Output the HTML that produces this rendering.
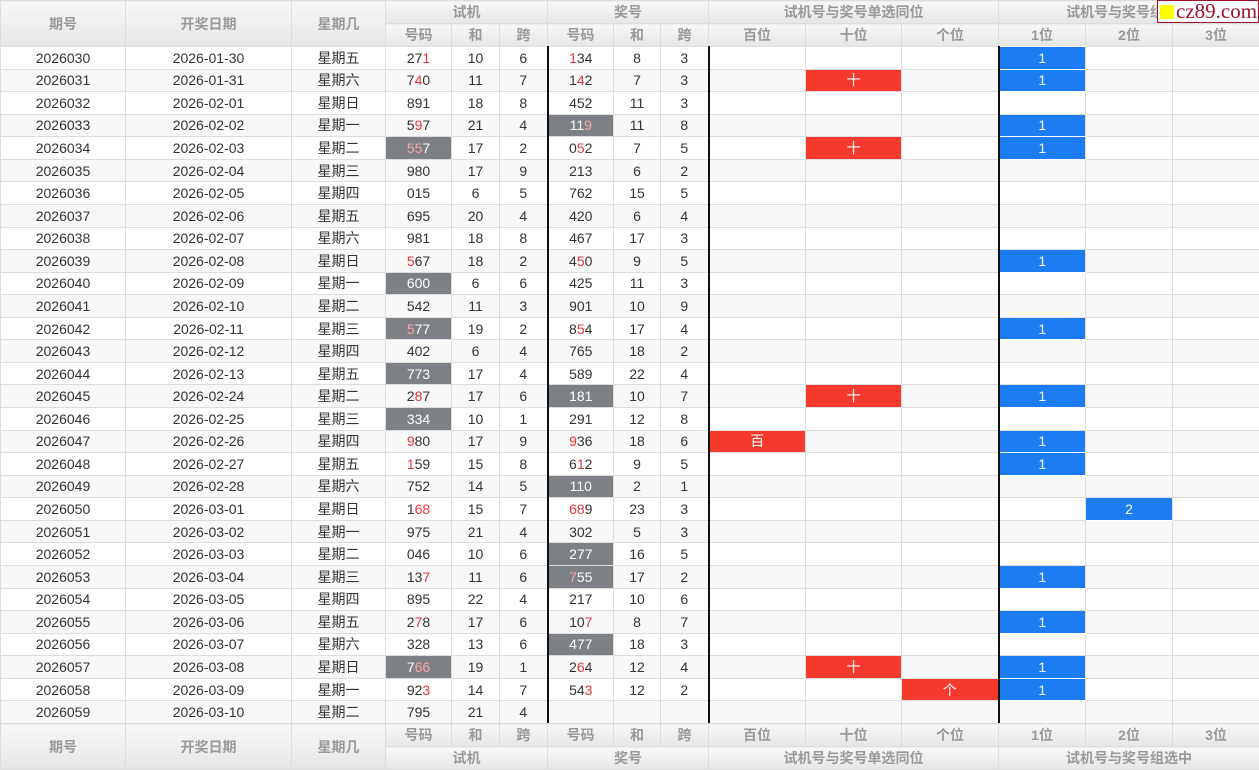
<!DOCTYPE html>
<html><head><meta charset="utf-8"><style>
*{margin:0;padding:0;box-sizing:border-box}
body{width:1259px;height:768px;overflow:hidden;background:#fff;font-family:"Liberation Sans","Noto Sans CJK SC",sans-serif;font-size:14px;color:#333;position:relative}
table{border-collapse:collapse;table-layout:fixed;width:1259px;position:absolute;left:0}
td,th{border:1px solid #ddd;text-align:center;white-space:nowrap;overflow:hidden;padding:0}
th{background:linear-gradient(#f7f7f7,#e6e6e6);color:#999;font-weight:bold;height:23px;font-size:14px}
#hd{top:0}#ft{top:723px}
#bd{top:46px}
#bd tr{height:22.57px}
#bd tr:nth-child(even) td{background:#f8f8f8}
#bd td.g{background:#7d8084!important;color:#fff}
#bd td.b{background:#1c7cf2!important;color:#fff;border-color:#fff #ddd}
#bd td.x{background:#f5392c!important;color:#fff}
.r{color:#e8363c}
.g .r{color:#f8a7a7}
.L{border-left:2px solid #111!important}
#logo{position:absolute;left:1157px;top:0;width:102px;height:23px;background:#fff;border:1px solid #a0102a;font-family:"Liberation Serif",serif;font-size:21px;color:#a0102a;line-height:20px;padding-left:2px}
#logo i{display:inline-block;width:14px;height:14px;background:#ffff00;margin-right:2px;vertical-align:-1px}
</style></head><body>
<table id="hd"><colgroup><col width="125"><col width="166"><col width="94"><col width="66"><col width="48"><col width="48"><col width="66"><col width="47"><col width="48"><col width="97"><col width="96"><col width="97"><col width="87"><col width="87"><col width="87"></colgroup>
<tr><th rowspan="2">期号</th><th rowspan="2">开奖日期</th><th rowspan="2">星期几</th><th colspan="3">试机</th><th colspan="3">奖号</th><th colspan="3">试机号与奖号单选同位</th><th colspan="3">试机号与奖号组选中</th></tr>
<tr><th>号码</th><th>和</th><th>跨</th><th>号码</th><th>和</th><th>跨</th><th>百位</th><th>十位</th><th>个位</th><th>1位</th><th>2位</th><th>3位</th></tr>
</table>
<table id="bd"><colgroup><col width="125"><col width="166"><col width="94"><col width="66"><col width="48"><col width="48"><col width="66"><col width="47"><col width="48"><col width="97"><col width="96"><col width="97"><col width="87"><col width="87"><col width="87"></colgroup>
<tr><td>2026030</td><td>2026-01-30</td><td>星期五</td><td>27<span class="r">1</span></td><td>10</td><td>6</td><td class="L"><span class="r">1</span>34</td><td>8</td><td>3</td><td class="L"></td><td></td><td></td><td class="L b">1</td><td></td><td></td></tr>
<tr><td>2026031</td><td>2026-01-31</td><td>星期六</td><td>7<span class="r">4</span>0</td><td>11</td><td>7</td><td class="L">1<span class="r">4</span>2</td><td>7</td><td>3</td><td class="L"></td><td class="x">十</td><td></td><td class="L b">1</td><td></td><td></td></tr>
<tr><td>2026032</td><td>2026-02-01</td><td>星期日</td><td>891</td><td>18</td><td>8</td><td class="L">452</td><td>11</td><td>3</td><td class="L"></td><td></td><td></td><td class="L"></td><td></td><td></td></tr>
<tr><td>2026033</td><td>2026-02-02</td><td>星期一</td><td>5<span class="r">9</span>7</td><td>21</td><td>4</td><td class="L g">11<span class="r">9</span></td><td>11</td><td>8</td><td class="L"></td><td></td><td></td><td class="L b">1</td><td></td><td></td></tr>
<tr><td>2026034</td><td>2026-02-03</td><td>星期二</td><td class="g"><span class="r">55</span>7</td><td>17</td><td>2</td><td class="L">0<span class="r">5</span>2</td><td>7</td><td>5</td><td class="L"></td><td class="x">十</td><td></td><td class="L b">1</td><td></td><td></td></tr>
<tr><td>2026035</td><td>2026-02-04</td><td>星期三</td><td>980</td><td>17</td><td>9</td><td class="L">213</td><td>6</td><td>2</td><td class="L"></td><td></td><td></td><td class="L"></td><td></td><td></td></tr>
<tr><td>2026036</td><td>2026-02-05</td><td>星期四</td><td>015</td><td>6</td><td>5</td><td class="L">762</td><td>15</td><td>5</td><td class="L"></td><td></td><td></td><td class="L"></td><td></td><td></td></tr>
<tr><td>2026037</td><td>2026-02-06</td><td>星期五</td><td>695</td><td>20</td><td>4</td><td class="L">420</td><td>6</td><td>4</td><td class="L"></td><td></td><td></td><td class="L"></td><td></td><td></td></tr>
<tr><td>2026038</td><td>2026-02-07</td><td>星期六</td><td>981</td><td>18</td><td>8</td><td class="L">467</td><td>17</td><td>3</td><td class="L"></td><td></td><td></td><td class="L"></td><td></td><td></td></tr>
<tr><td>2026039</td><td>2026-02-08</td><td>星期日</td><td><span class="r">5</span>67</td><td>18</td><td>2</td><td class="L">4<span class="r">5</span>0</td><td>9</td><td>5</td><td class="L"></td><td></td><td></td><td class="L b">1</td><td></td><td></td></tr>
<tr><td>2026040</td><td>2026-02-09</td><td>星期一</td><td class="g">600</td><td>6</td><td>6</td><td class="L">425</td><td>11</td><td>3</td><td class="L"></td><td></td><td></td><td class="L"></td><td></td><td></td></tr>
<tr><td>2026041</td><td>2026-02-10</td><td>星期二</td><td>542</td><td>11</td><td>3</td><td class="L">901</td><td>10</td><td>9</td><td class="L"></td><td></td><td></td><td class="L"></td><td></td><td></td></tr>
<tr><td>2026042</td><td>2026-02-11</td><td>星期三</td><td class="g"><span class="r">5</span>77</td><td>19</td><td>2</td><td class="L">8<span class="r">5</span>4</td><td>17</td><td>4</td><td class="L"></td><td></td><td></td><td class="L b">1</td><td></td><td></td></tr>
<tr><td>2026043</td><td>2026-02-12</td><td>星期四</td><td>402</td><td>6</td><td>4</td><td class="L">765</td><td>18</td><td>2</td><td class="L"></td><td></td><td></td><td class="L"></td><td></td><td></td></tr>
<tr><td>2026044</td><td>2026-02-13</td><td>星期五</td><td class="g">773</td><td>17</td><td>4</td><td class="L">589</td><td>22</td><td>4</td><td class="L"></td><td></td><td></td><td class="L"></td><td></td><td></td></tr>
<tr><td>2026045</td><td>2026-02-24</td><td>星期二</td><td>2<span class="r">8</span>7</td><td>17</td><td>6</td><td class="L g">181</td><td>10</td><td>7</td><td class="L"></td><td class="x">十</td><td></td><td class="L b">1</td><td></td><td></td></tr>
<tr><td>2026046</td><td>2026-02-25</td><td>星期三</td><td class="g">334</td><td>10</td><td>1</td><td class="L">291</td><td>12</td><td>8</td><td class="L"></td><td></td><td></td><td class="L"></td><td></td><td></td></tr>
<tr><td>2026047</td><td>2026-02-26</td><td>星期四</td><td><span class="r">9</span>80</td><td>17</td><td>9</td><td class="L"><span class="r">9</span>36</td><td>18</td><td>6</td><td class="L x">百</td><td></td><td></td><td class="L b">1</td><td></td><td></td></tr>
<tr><td>2026048</td><td>2026-02-27</td><td>星期五</td><td><span class="r">1</span>59</td><td>15</td><td>8</td><td class="L">6<span class="r">1</span>2</td><td>9</td><td>5</td><td class="L"></td><td></td><td></td><td class="L b">1</td><td></td><td></td></tr>
<tr><td>2026049</td><td>2026-02-28</td><td>星期六</td><td>752</td><td>14</td><td>5</td><td class="L g">110</td><td>2</td><td>1</td><td class="L"></td><td></td><td></td><td class="L"></td><td></td><td></td></tr>
<tr><td>2026050</td><td>2026-03-01</td><td>星期日</td><td>1<span class="r">68</span></td><td>15</td><td>7</td><td class="L"><span class="r">68</span>9</td><td>23</td><td>3</td><td class="L"></td><td></td><td></td><td class="L"></td><td class="b">2</td><td></td></tr>
<tr><td>2026051</td><td>2026-03-02</td><td>星期一</td><td>975</td><td>21</td><td>4</td><td class="L">302</td><td>5</td><td>3</td><td class="L"></td><td></td><td></td><td class="L"></td><td></td><td></td></tr>
<tr><td>2026052</td><td>2026-03-03</td><td>星期二</td><td>046</td><td>10</td><td>6</td><td class="L g">277</td><td>16</td><td>5</td><td class="L"></td><td></td><td></td><td class="L"></td><td></td><td></td></tr>
<tr><td>2026053</td><td>2026-03-04</td><td>星期三</td><td>13<span class="r">7</span></td><td>11</td><td>6</td><td class="L g"><span class="r">7</span>55</td><td>17</td><td>2</td><td class="L"></td><td></td><td></td><td class="L b">1</td><td></td><td></td></tr>
<tr><td>2026054</td><td>2026-03-05</td><td>星期四</td><td>895</td><td>22</td><td>4</td><td class="L">217</td><td>10</td><td>6</td><td class="L"></td><td></td><td></td><td class="L"></td><td></td><td></td></tr>
<tr><td>2026055</td><td>2026-03-06</td><td>星期五</td><td>2<span class="r">7</span>8</td><td>17</td><td>6</td><td class="L">10<span class="r">7</span></td><td>8</td><td>7</td><td class="L"></td><td></td><td></td><td class="L b">1</td><td></td><td></td></tr>
<tr><td>2026056</td><td>2026-03-07</td><td>星期六</td><td>328</td><td>13</td><td>6</td><td class="L g">477</td><td>18</td><td>3</td><td class="L"></td><td></td><td></td><td class="L"></td><td></td><td></td></tr>
<tr><td>2026057</td><td>2026-03-08</td><td>星期日</td><td class="g">7<span class="r">66</span></td><td>19</td><td>1</td><td class="L">2<span class="r">6</span>4</td><td>12</td><td>4</td><td class="L"></td><td class="x">十</td><td></td><td class="L b">1</td><td></td><td></td></tr>
<tr><td>2026058</td><td>2026-03-09</td><td>星期一</td><td>92<span class="r">3</span></td><td>14</td><td>7</td><td class="L">54<span class="r">3</span></td><td>12</td><td>2</td><td class="L"></td><td></td><td class="x">个</td><td class="L b">1</td><td></td><td></td></tr>
<tr><td>2026059</td><td>2026-03-10</td><td>星期二</td><td>795</td><td>21</td><td>4</td><td class="L"></td><td></td><td></td><td class="L"></td><td></td><td></td><td class="L"></td><td></td><td></td></tr>
</table>
<table id="ft"><colgroup><col width="125"><col width="166"><col width="94"><col width="66"><col width="48"><col width="48"><col width="66"><col width="47"><col width="48"><col width="97"><col width="96"><col width="97"><col width="87"><col width="87"><col width="87"></colgroup>
<tr><th rowspan="2" style="height:45px">期号</th><th rowspan="2">开奖日期</th><th rowspan="2">星期几</th><th>号码</th><th>和</th><th>跨</th><th>号码</th><th>和</th><th>跨</th><th>百位</th><th>十位</th><th>个位</th><th>1位</th><th>2位</th><th>3位</th></tr>
<tr><th colspan="3">试机</th><th colspan="3">奖号</th><th colspan="3">试机号与奖号单选同位</th><th colspan="3">试机号与奖号组选中</th></tr>
</table>
<div id="logo"><i></i>cz89.com</div>
</body></html>
